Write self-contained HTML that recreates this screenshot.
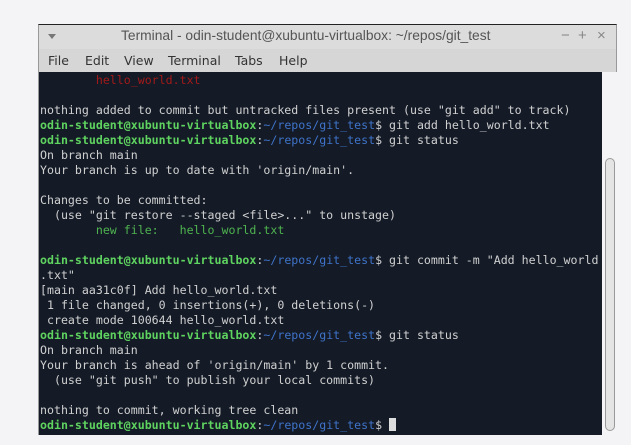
<!DOCTYPE html>
<html><head><meta charset="utf-8"><style>
*{margin:0;padding:0;box-sizing:border-box}
body{width:631px;height:445px;background:#f4f4f6;position:relative;overflow:hidden;font-family:"Liberation Sans",sans-serif}
.win{position:absolute;left:38px;top:24px;width:579px;height:411px;background:#efeff1;border:1px solid #999;border-top:1px solid #222}
.title{position:absolute;left:0;top:0;width:100%;height:24px;background:#dcdcdc;color:#555;line-height:22px}
.title .t{position:absolute;left:82px;top:0;font-family:"Liberation Sans",sans-serif;font-size:13.8px;white-space:nowrap}
.tri{position:absolute;left:9px;top:9px;width:0;height:0;border-left:4px solid transparent;border-right:4px solid transparent;border-top:5px solid #777}
.ctl{position:absolute;top:0;font-size:15px;color:#888;line-height:22px}
.menu{position:absolute;left:0;top:24px;width:100%;height:23px;background:#d6d6d6;color:#333;line-height:24px;font-family:"DejaVu Sans",sans-serif;font-size:12.5px}
.menu span{position:absolute}
.term{position:absolute;left:0;top:47px;width:563px;height:363px;background:#141b27;font-family:"DejaVu Sans Mono","Liberation Mono",monospace;font-size:11.6px;line-height:15px;color:#d0d0d0;white-space:pre;padding:1px 0 0 1px;overflow:hidden}
.sb{position:absolute;left:563px;top:47px;width:15px;height:363px;background:#f4f4f6}
.thumb{position:absolute;left:3px;top:86px;width:10px;height:273px;background:#e4e4e4;border:1px solid #999;border-radius:5px}
.g{color:#5fd35f;font-weight:bold}.b{color:#3f73c9}.r{color:#a11a1a}.gn{color:#4fb34f}
.cur{display:inline-block;width:7px;height:13px;background:#ddd;vertical-align:-2px}
</style></head><body>
<div class="win">
<div class="title"><div class="tri"></div><span class="t">Terminal - odin-student@xubuntu-virtualbox: ~/repos/git_test</span>
<span class="ctl" style="left:522px">−</span><span class="ctl" style="left:539px">+</span><span class="ctl" style="left:558px">×</span></div>
<div class="menu"><span style="left:9px">File</span><span style="left:46px">Edit</span><span style="left:85px">View</span><span style="left:129px">Terminal</span><span style="left:196px">Tabs</span><span style="left:240px">Help</span></div>
<div class="term"><span class="r">        hello_world.txt</span>

nothing added to commit but untracked files present (use "git add" to track)
<span class="g">odin-student@xubuntu-virtualbox</span>:<span class="b">~/repos/git_test</span>$ git add hello_world.txt
<span class="g">odin-student@xubuntu-virtualbox</span>:<span class="b">~/repos/git_test</span>$ git status
On branch main
Your branch is up to date with 'origin/main'.

Changes to be committed:
  (use "git restore --staged &lt;file&gt;..." to unstage)
<span class="gn">        new file:   hello_world.txt</span>

<span class="g">odin-student@xubuntu-virtualbox</span>:<span class="b">~/repos/git_test</span>$ git commit -m "Add hello_world
.txt"
[main aa31c0f] Add hello_world.txt
 1 file changed, 0 insertions(+), 0 deletions(-)
 create mode 100644 hello_world.txt
<span class="g">odin-student@xubuntu-virtualbox</span>:<span class="b">~/repos/git_test</span>$ git status
On branch main
Your branch is ahead of 'origin/main' by 1 commit.
  (use "git push" to publish your local commits)

nothing to commit, working tree clean
<span class="g">odin-student@xubuntu-virtualbox</span>:<span class="b">~/repos/git_test</span>$ <span class="cur"></span></div>
<div class="sb"><div class="thumb"></div></div>
</div>
</body></html>
